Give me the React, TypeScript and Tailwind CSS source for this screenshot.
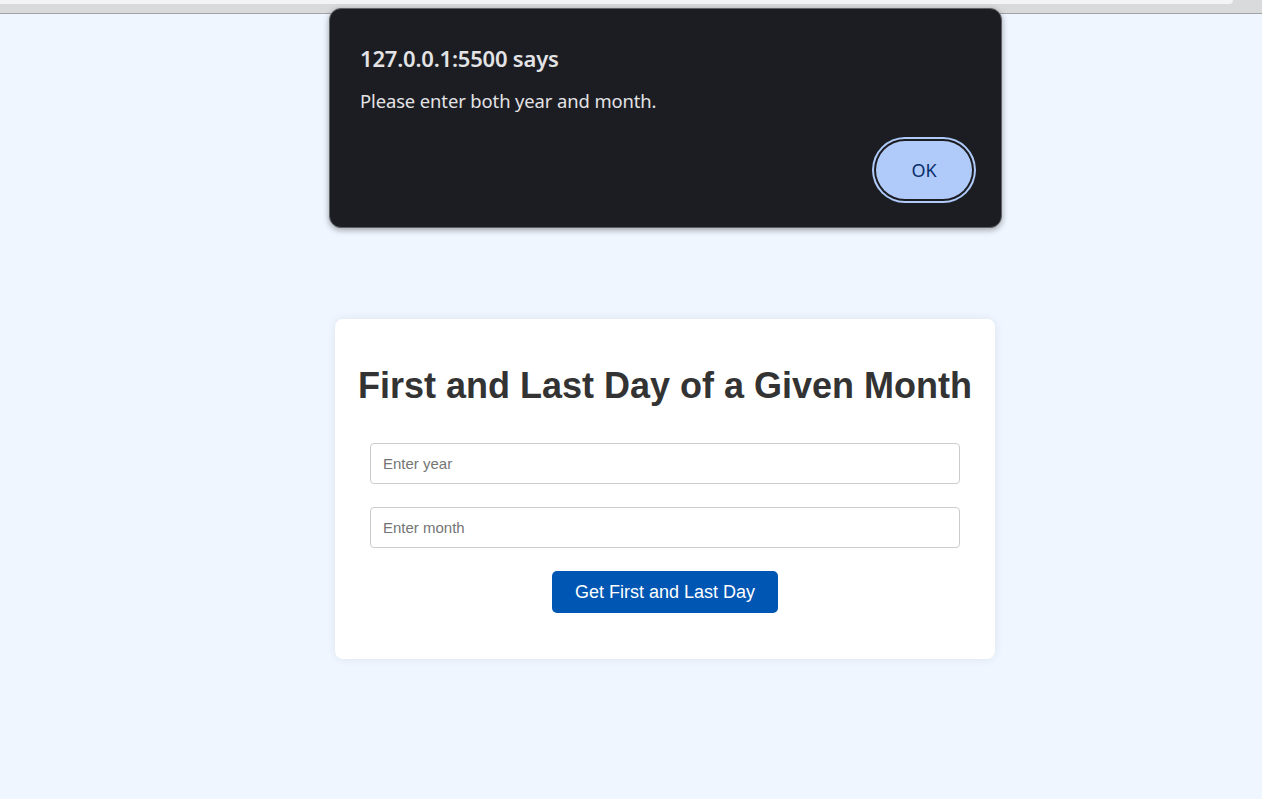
import React from "react";

const App = () => {
    return (
        <div className="relative min-h-[799px] bg-[#eff6ff] font-['Liberation_Sans',Arial,sans-serif]">
            {/* browser chrome edge */}
            <div className="h-[14px] bg-[#d9dadc] border-b border-[#a3a4a7]">
                <div className="h-[4px] w-[1233px] bg-[#f3f4f5] rounded-br-[6px]" />
            </div>

            <div className="flex justify-center pl-[68px] pt-[305px]">
                <div className="w-[660px] bg-white rounded-lg shadow-[0_0_10px_rgba(0,0,0,0.08)] px-[30px] pt-[28px] pb-[46px] flex flex-col items-center">
                    <h1 className="text-[36px] font-bold text-[#333] my-[18px] leading-[41px] whitespace-nowrap">
                        First and Last Day of a Given Month
                    </h1>
                    <input
                        type="text"
                        placeholder="Enter year"
                        className="mt-[19px] w-[590px] h-[41px] border border-[#ccc] rounded-[4px] px-[12px] text-[15px] placeholder:text-[#757575] outline-none"
                    />
                    <input
                        type="text"
                        placeholder="Enter month"
                        className="mt-[23px] w-[590px] h-[41px] border border-[#ccc] rounded-[4px] px-[12px] text-[15px] placeholder:text-[#757575] outline-none"
                    />
                    <button className="mt-[23px] w-[226px] h-[42px] bg-[#0056b3] text-white text-[18px] rounded-[5px]">
                        Get First and Last Day
                    </button>
                </div>
            </div>

            {/* alert dialog */}
            <div className="absolute top-[8px] left-[329px] w-[673px] h-[220px] bg-[#1c1d22] rounded-[12px] border border-[#5f6066] shadow-[0_2px_6px_rgba(0,0,0,0.35)] font-['Noto_Sans','Open_Sans',sans-serif] text-[#e3e3e6] pl-[30px] pr-[25px] flex flex-col">
                <div className="mt-[34px] text-[22px] font-semibold leading-[30px] tracking-[-0.2px]">
                    127.0.0.1:5500 says
                </div>
                <div className="mt-[15px] text-[18.4px] leading-[26px] tracking-[-0.1px]">
                    Please enter both year and month.
                </div>
                <div className="mt-auto mb-[28px] flex justify-end">
                    <button className="w-[96px] h-[58px] mr-[4px] rounded-full bg-[#b0cbfa] text-[#0a2e6b] text-[18px] shadow-[0_0_0_2px_#1c1d22,0_0_0_4px_#b0cbfa]">
                        OK
                    </button>
                </div>
            </div>
        </div>
    );
};

export default App;
